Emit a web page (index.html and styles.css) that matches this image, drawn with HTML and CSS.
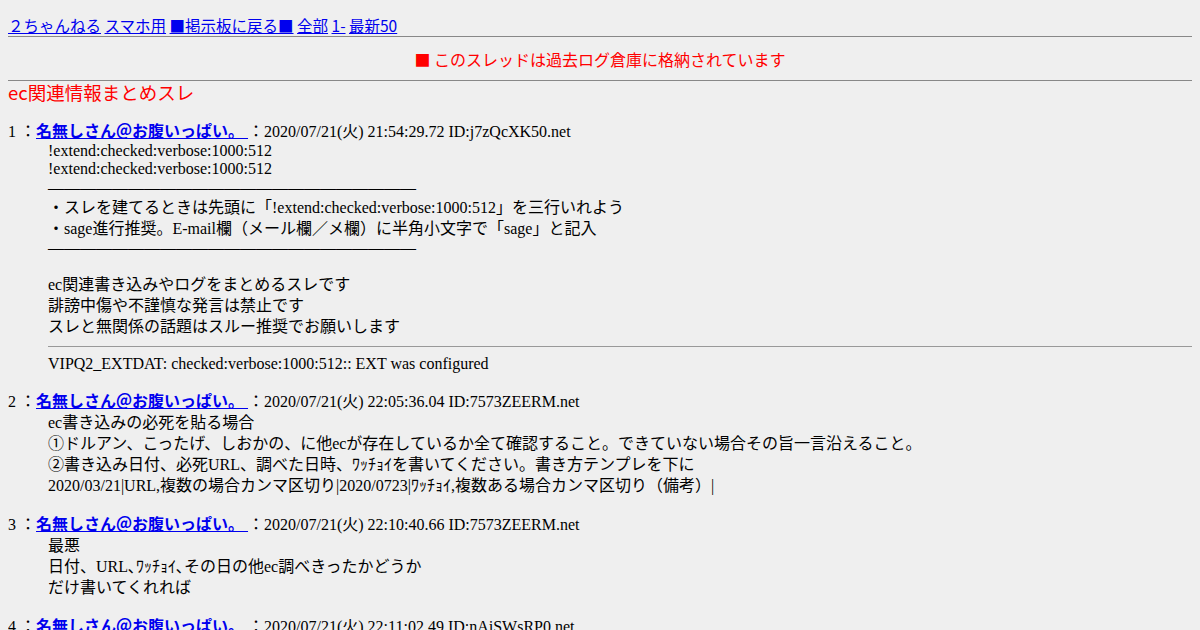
FILE: index.html
```html
<!DOCTYPE html>
<html lang="ja">
<head>
    <meta charset="UTF-8">
    <title>ec関連情報まとめスレ</title>
    <link rel="stylesheet" href="styles.css">
</head>
<body>
    <div class="menu">
        <a href="#">２ちゃんねる</a> <a href="#">スマホ用</a> <a href="#">■掲示板に戻る■</a> <a href="#">全部</a> <a href="#">1-</a> <a href="#">最新50</a>
    </div>
    <hr class="sep">
    <div class="notice">■ このスレッドは過去ログ倉庫に格納されています</div>
    <hr class="sep">
    <h1 class="title">ec関連情報まとめスレ</h1>
    <dl class="thread">
        <dt>1 ：<a class="name" href="#">名無しさん＠お腹いっぱい。 </a>：2020/07/21(火) 21:54:29.72 ID:j7zQcXK50.net</dt>
        <dd>
            <div class="cmd">!extend:checked:verbose:1000:512<br>!extend:checked:verbose:1000:512</div>
            <div class="rule">―――――――――――――――――――――――</div>
            <div>・スレを建てるときは先頭に「!extend:checked:verbose:1000:512」を三行いれよう<br>・sage進行推奨。E-mail欄（メール欄／メ欄）に半角小文字で「sage」と記入</div>
            <div class="rule">―――――――――――――――――――――――</div>
            <div class="intro">ec関連書き込みやログをまとめるスレです<br>誹謗中傷や不謹慎な発言は禁止です<br>スレと無関係の話題はスルー推奨でお願いします</div>
            <hr>
            <div class="extdat">VIPQ2_EXTDAT: checked:verbose:1000:512:: EXT was configured</div>
        </dd>
        <dt>2 ：<a class="name" href="#">名無しさん＠お腹いっぱい。 </a>：2020/07/21(火) 22:05:36.04 ID:7573ZEERM.net</dt>
        <dd>
            ec書き込みの必死を貼る場合<br>
            ①ドルアン、こったげ、しおかの、に他ecが存在しているか全て確認すること。できていない場合その旨一言沿えること。<br>
            ②書き込み日付、必死URL、調べた日時、ﾜｯﾁｮｲを書いてください。書き方テンプレを下に<br>
            2020/03/21|URL,複数の場合カンマ区切り|2020/0723|ﾜｯﾁｮｲ,複数ある場合カンマ区切り（備考）|
        </dd>
        <dt>3 ：<a class="name" href="#">名無しさん＠お腹いっぱい。 </a>：2020/07/21(火) 22:10:40.66 ID:7573ZEERM.net</dt>
        <dd>
            最悪<br>
            日付、URL､ﾜｯﾁｮｲ､その日の他ec調べきったかどうか<br>
            だけ書いてくれれば
        </dd>
        <dt>4 ：<a class="name" href="#">名無しさん＠お腹いっぱい。 </a>：2020/07/21(火) 22:11:02.49 ID:nAjSWsRP0.net</dt>
    </dl>
</body>
</html>
```

FILE: styles.css
```css
body {
    margin: 8px;
    background-color: #efefef;
    color: #000;
    font-family: "Liberation Serif", "Noto Sans CJK JP", serif;
    font-size: 16px;
}
a {
    color: #0000ee;
}
.menu {
    margin-top: 6px;
    font-size: 15.5px;
    line-height: 22px;
    font-family: "Noto Sans CJK JP", sans-serif;
}
hr.sep {
    height: 1px;
    border: 0;
    background-color: #888;
    margin: 0;
}
.notice {
    margin: 11px 0 10px;
    line-height: 22px;
    color: red;
    text-align: center;
    font-family: "Noto Sans CJK JP", sans-serif;
}
.title {
    margin: 0;
    font-size: 18.5px;
    font-weight: normal;
    line-height: 22px;
    color: red;
    font-family: "Noto Sans CJK JP", sans-serif;
}
.thread {
    margin: 18px 0 0;
}
.thread dt {
    line-height: 21px;
}
.thread dd {
    margin: 0 0 18px 40px;
    line-height: 21px;
}
.name {
    font-weight: bold;
}
.cmd,
.rule,
.extdat {
    line-height: 18.4px;
}
.intro {
    margin-top: 16px;
}
.thread dd hr {
    height: 1px;
    border: 0;
    background-color: #999;
    margin: 9px 0 8px;
}
```
